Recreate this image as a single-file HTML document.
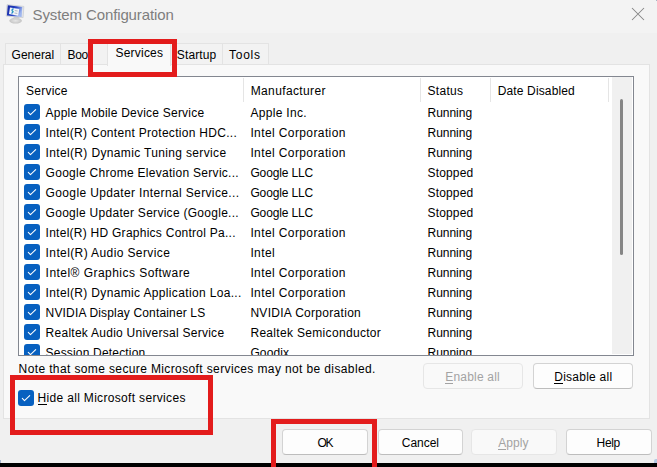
<!DOCTYPE html>
<html><head><meta charset="utf-8">
<style>
html,body{margin:0;padding:0;}
body{width:657px;height:467px;position:relative;overflow:hidden;background:#f0f0f0;font-family:"Liberation Sans",sans-serif;font-size:12px;color:#000;}
.a{position:absolute;}
.t{position:absolute;white-space:nowrap;line-height:20px;}
.tab{position:absolute;top:43px;height:22px;background:#f2f2f2;border:1px solid #e3e3e3;border-radius:1px 1px 0 0;border-bottom:none;box-sizing:border-box;}
.cb{position:absolute;width:16px;height:16px;border-radius:3px;background:#0760c0;}
.cb svg{position:absolute;left:0;top:0;}
.btn{position:absolute;box-sizing:border-box;border:1px solid #d3d3d3;border-bottom-color:#bdbdbd;border-radius:4px;background:#fdfdfd;}
.btn.dis{border-color:#e6e6e6;background:#f9f9f9;}
.red{position:absolute;box-sizing:border-box;border:5px solid #e31c1c;}
u{text-decoration:none;position:relative;}
u:after{content:"";position:absolute;left:0;right:0;bottom:0px;height:1px;background:currentColor;}
</style></head>
<body>

<div class="a" style="left:0;top:0;width:657px;height:33px;background:#f3f3f3;"></div>
<svg class="a" style="left:0;top:0" width="30" height="30" viewBox="0 0 30 30">
  <defs>
   <linearGradient id="scr" x1="0" y1="0" x2="1" y2="0.4">
    <stop offset="0" stop-color="#1424a0"/><stop offset="0.6" stop-color="#2844c4"/><stop offset="1" stop-color="#9fb6ee"/>
   </linearGradient>
   <radialGradient id="stand" cx="0.5" cy="0.5" r="0.5">
    <stop offset="0" stop-color="#e6e6e6"/><stop offset="1" stop-color="#c4c4c4"/>
   </radialGradient>
  </defs>
  <ellipse cx="15.6" cy="20.7" rx="6.3" ry="2.9" fill="url(#stand)"/>
  <polygon points="13.5,16.5 19.5,17 19,19.5 14,19.2" fill="#d0d0d0"/>
  <polygon points="7,4.6 23.9,6.4 23.1,17.6 6.2,16.1" fill="#e4e6ea" stroke="#b9bcc2" stroke-width="0.5"/>
  <polygon points="7.8,5.2 22.3,6.9 21.6,16.9 6.9,15.5" fill="url(#scr)"/>
  <polygon points="10,7.4 19.3,9 18.2,15.7 9,14" fill="#f3f5f8"/>
  <path d="M13.6,8.6 Q11.2,9.6 12.4,11 Q13.6,12.2 11.4,13.4" stroke="#2a8fd0" stroke-width="1.4" fill="none"/><path d="M12.4,11 L13.6,11.4" stroke="#3cc0a0" stroke-width="1"/>
  <path d="M14.8,10.6 L17.6,11 M14.5,13 L17.3,13.4" stroke="#a4acb8" stroke-width="0.9"/>
</svg>
<svg class="a" style="left:631px;top:7px" width="14" height="14" viewBox="0 0 14 14"><path d="M1,1 L13,13 M13,1 L1,13" stroke="#858585" stroke-width="1.05"/></svg>
<div class="tab" style="left:5px;width:56px;"></div>
<div class="tab" style="left:60px;width:48px;"></div>
<div class="tab" style="left:172px;width:51px;"></div>
<div class="tab" style="left:222px;width:47px;"></div>
<div class="a" style="left:3px;top:64px;width:647px;height:355px;background:#f9f9f9;border:1px solid #e3e3e3;box-sizing:border-box;"></div>
<div class="tab" style="left:107px;top:42px;width:64px;height:24px;background:#f9f9f9;"></div>
<div class="a" style="left:18px;top:76px;width:616px;height:280px;background:#fff;border:1px solid #838790;box-sizing:border-box;"></div>
<div class="a" style="left:243px;top:78px;width:1px;height:24px;background:#e5e5e5;"></div>
<div class="a" style="left:420px;top:78px;width:1px;height:24px;background:#e5e5e5;"></div>
<div class="a" style="left:490px;top:78px;width:1px;height:24px;background:#e5e5e5;"></div>
<div class="a" style="left:608px;top:78px;width:1px;height:24px;background:#e5e5e5;"></div>
<div class="a" style="left:612px;top:77px;width:20px;height:277px;background:#f0f0f0;"></div>
<div class="a" style="left:620px;top:99px;width:3px;height:156px;background:#858585;border-radius:1.5px;"></div>
<div class="cb" style="left:18px;top:390px;"><svg width="16" height="16" viewBox="0 0 16 16"><path d="M4.3,8.4 L6.5,10.6 L11.7,5.6" stroke="#fff" stroke-width="1.05" fill="none" stroke-linecap="round" stroke-linejoin="round"/></svg></div>
<div class="btn dis" style="left:423px;top:363px;width:100px;height:26px;"></div>
<div class="btn" style="left:533px;top:363px;width:100px;height:26px;"></div>
<div class="btn" style="left:282px;top:429px;width:86px;height:26px;"></div>
<div class="btn" style="left:378px;top:429px;width:85px;height:26px;"></div>
<div class="btn dis" style="left:471px;top:429px;width:86px;height:26px;"></div>
<div class="btn" style="left:566px;top:429px;width:86px;height:26px;"></div>
<div class="t" id="title" style="left:32.60px;top:5px;font-size:15px;letter-spacing:-0.116px;color:#7e7e7e;">System Configuration</div>
<div class="t" id="tab_general" style="left:11.60px;top:45px;font-size:12px;letter-spacing:-0.017px;">General</div>
<div class="t" id="tab_boot" style="left:67.60px;top:45px;font-size:12px;letter-spacing:-0.433px;">Boot</div>
<div class="t" id="tab_services" style="left:115.50px;top:43px;font-size:12px;letter-spacing:0.214px;">Services</div>
<div class="t" id="tab_startup" style="left:176.80px;top:45px;font-size:12px;letter-spacing:0.133px;">Startup</div>
<div class="t" id="tab_tools" style="left:229.00px;top:45px;font-size:12px;letter-spacing:0.750px;">Tools</div>
<div class="t" id="h_service" style="left:26.10px;top:81px;font-size:12px;letter-spacing:0.233px;">Service</div>
<div class="t" id="h_manu" style="left:250.70px;top:81px;font-size:12px;letter-spacing:0.373px;">Manufacturer</div>
<div class="t" id="h_status" style="left:427.40px;top:81px;font-size:12px;letter-spacing:0.340px;">Status</div>
<div class="t" id="h_date" style="left:497.70px;top:81px;font-size:12px;letter-spacing:0.142px;">Date Disabled</div>
<div class="t" id="note" style="left:18.60px;top:359px;font-size:12px;letter-spacing:0.377px;">Note that some secure Microsoft services may not be disabled.</div>
<div class="t" id="hide" style="left:37.50px;top:388px;font-size:12px;letter-spacing:0.327px;"><u>H</u>ide all Microsoft services</div>
<div class="t" id="enable" style="left:445.20px;top:367px;font-size:12px;letter-spacing:0.200px;color:#a3a3a3;"><u>E</u>nable all</div>
<div class="t" id="disable" style="left:554.30px;top:367px;font-size:12px;letter-spacing:0.240px;"><u>D</u>isable all</div>
<div class="t" id="ok" style="left:317.40px;top:433px;font-size:12px;letter-spacing:-1.300px;">OK</div>
<div class="t" id="cancel" style="left:401.80px;top:433px;font-size:12px;letter-spacing:-0.040px;">Cancel</div>
<div class="t" id="apply" style="left:498.20px;top:433px;font-size:12px;letter-spacing:0.100px;color:#a3a3a3;"><u>A</u>pply</div>
<div class="t" id="help" style="left:596.60px;top:433px;font-size:12px;letter-spacing:-0.333px;">Help</div>
<div class="a" style="left:19px;top:77px;width:593px;height:278px;overflow:hidden;"><div class="a" style="left:-19px;top:-77px;width:657px;height:467px;">
<div class="cb" style="left:24px;top:104px;"><svg width="16" height="16" viewBox="0 0 16 16"><path d="M4.3,8.4 L6.5,10.6 L11.7,5.6" stroke="#fff" stroke-width="1.05" fill="none" stroke-linecap="round" stroke-linejoin="round"/></svg></div>
<div class="cb" style="left:24px;top:124px;"><svg width="16" height="16" viewBox="0 0 16 16"><path d="M4.3,8.4 L6.5,10.6 L11.7,5.6" stroke="#fff" stroke-width="1.05" fill="none" stroke-linecap="round" stroke-linejoin="round"/></svg></div>
<div class="cb" style="left:24px;top:144px;"><svg width="16" height="16" viewBox="0 0 16 16"><path d="M4.3,8.4 L6.5,10.6 L11.7,5.6" stroke="#fff" stroke-width="1.05" fill="none" stroke-linecap="round" stroke-linejoin="round"/></svg></div>
<div class="cb" style="left:24px;top:164px;"><svg width="16" height="16" viewBox="0 0 16 16"><path d="M4.3,8.4 L6.5,10.6 L11.7,5.6" stroke="#fff" stroke-width="1.05" fill="none" stroke-linecap="round" stroke-linejoin="round"/></svg></div>
<div class="cb" style="left:24px;top:184px;"><svg width="16" height="16" viewBox="0 0 16 16"><path d="M4.3,8.4 L6.5,10.6 L11.7,5.6" stroke="#fff" stroke-width="1.05" fill="none" stroke-linecap="round" stroke-linejoin="round"/></svg></div>
<div class="cb" style="left:24px;top:204px;"><svg width="16" height="16" viewBox="0 0 16 16"><path d="M4.3,8.4 L6.5,10.6 L11.7,5.6" stroke="#fff" stroke-width="1.05" fill="none" stroke-linecap="round" stroke-linejoin="round"/></svg></div>
<div class="cb" style="left:24px;top:224px;"><svg width="16" height="16" viewBox="0 0 16 16"><path d="M4.3,8.4 L6.5,10.6 L11.7,5.6" stroke="#fff" stroke-width="1.05" fill="none" stroke-linecap="round" stroke-linejoin="round"/></svg></div>
<div class="cb" style="left:24px;top:244px;"><svg width="16" height="16" viewBox="0 0 16 16"><path d="M4.3,8.4 L6.5,10.6 L11.7,5.6" stroke="#fff" stroke-width="1.05" fill="none" stroke-linecap="round" stroke-linejoin="round"/></svg></div>
<div class="cb" style="left:24px;top:264px;"><svg width="16" height="16" viewBox="0 0 16 16"><path d="M4.3,8.4 L6.5,10.6 L11.7,5.6" stroke="#fff" stroke-width="1.05" fill="none" stroke-linecap="round" stroke-linejoin="round"/></svg></div>
<div class="cb" style="left:24px;top:284px;"><svg width="16" height="16" viewBox="0 0 16 16"><path d="M4.3,8.4 L6.5,10.6 L11.7,5.6" stroke="#fff" stroke-width="1.05" fill="none" stroke-linecap="round" stroke-linejoin="round"/></svg></div>
<div class="cb" style="left:24px;top:304px;"><svg width="16" height="16" viewBox="0 0 16 16"><path d="M4.3,8.4 L6.5,10.6 L11.7,5.6" stroke="#fff" stroke-width="1.05" fill="none" stroke-linecap="round" stroke-linejoin="round"/></svg></div>
<div class="cb" style="left:24px;top:324px;"><svg width="16" height="16" viewBox="0 0 16 16"><path d="M4.3,8.4 L6.5,10.6 L11.7,5.6" stroke="#fff" stroke-width="1.05" fill="none" stroke-linecap="round" stroke-linejoin="round"/></svg></div>
<div class="cb" style="left:24px;top:344px;"><svg width="16" height="16" viewBox="0 0 16 16"><path d="M4.3,8.4 L6.5,10.6 L11.7,5.6" stroke="#fff" stroke-width="1.05" fill="none" stroke-linecap="round" stroke-linejoin="round"/></svg></div>
<div class="t" id="r0_s" style="left:45.60px;top:103px;font-size:12px;letter-spacing:0.223px;">Apple Mobile Device Service</div>
<div class="t" id="r0_m" style="left:250.40px;top:103px;font-size:12px;letter-spacing:0.311px;">Apple Inc.</div>
<div class="t" id="r0_st" style="left:427.50px;top:103px;font-size:12px;letter-spacing:-0.017px;">Running</div>
<div class="t" id="r1_s" style="left:45.60px;top:123px;font-size:12px;letter-spacing:0.297px;">Intel(R) Content Protection HDC...</div>
<div class="t" id="r1_m" style="left:250.40px;top:123px;font-size:12px;letter-spacing:0.394px;">Intel Corporation</div>
<div class="t" id="r1_st" style="left:427.50px;top:123px;font-size:12px;letter-spacing:-0.017px;">Running</div>
<div class="t" id="r2_s" style="left:45.60px;top:143px;font-size:12px;letter-spacing:0.347px;">Intel(R) Dynamic Tuning service</div>
<div class="t" id="r2_m" style="left:250.40px;top:143px;font-size:12px;letter-spacing:0.394px;">Intel Corporation</div>
<div class="t" id="r2_st" style="left:427.50px;top:143px;font-size:12px;letter-spacing:-0.017px;">Running</div>
<div class="t" id="r3_s" style="left:45.60px;top:163px;font-size:12px;letter-spacing:0.281px;">Google Chrome Elevation Servic...</div>
<div class="t" id="r3_m" style="left:250.40px;top:163px;font-size:12px;letter-spacing:-0.133px;">Google LLC</div>
<div class="t" id="r3_st" style="left:427.50px;top:163px;font-size:12px;letter-spacing:0.167px;">Stopped</div>
<div class="t" id="r4_s" style="left:45.60px;top:183px;font-size:12px;letter-spacing:0.364px;">Google Updater Internal Service...</div>
<div class="t" id="r4_m" style="left:250.40px;top:183px;font-size:12px;letter-spacing:-0.133px;">Google LLC</div>
<div class="t" id="r4_st" style="left:427.50px;top:183px;font-size:12px;letter-spacing:0.167px;">Stopped</div>
<div class="t" id="r5_s" style="left:45.60px;top:203px;font-size:12px;letter-spacing:0.281px;">Google Updater Service (Google...</div>
<div class="t" id="r5_m" style="left:250.40px;top:203px;font-size:12px;letter-spacing:-0.133px;">Google LLC</div>
<div class="t" id="r5_st" style="left:427.50px;top:203px;font-size:12px;letter-spacing:0.167px;">Stopped</div>
<div class="t" id="r6_s" style="left:45.60px;top:223px;font-size:12px;letter-spacing:0.258px;">Intel(R) HD Graphics Control Pa...</div>
<div class="t" id="r6_m" style="left:250.40px;top:223px;font-size:12px;letter-spacing:0.394px;">Intel Corporation</div>
<div class="t" id="r6_st" style="left:427.50px;top:223px;font-size:12px;letter-spacing:-0.017px;">Running</div>
<div class="t" id="r7_s" style="left:45.60px;top:243px;font-size:12px;letter-spacing:0.390px;">Intel(R) Audio Service</div>
<div class="t" id="r7_m" style="left:250.40px;top:243px;font-size:12px;letter-spacing:0.400px;">Intel</div>
<div class="t" id="r7_st" style="left:427.50px;top:243px;font-size:12px;letter-spacing:-0.017px;">Running</div>
<div class="t" id="r8_s" style="left:45.60px;top:263px;font-size:12px;letter-spacing:0.461px;">Intel® Graphics Software</div>
<div class="t" id="r8_m" style="left:250.40px;top:263px;font-size:12px;letter-spacing:0.394px;">Intel Corporation</div>
<div class="t" id="r8_st" style="left:427.50px;top:263px;font-size:12px;letter-spacing:-0.017px;">Running</div>
<div class="t" id="r9_s" style="left:45.60px;top:283px;font-size:12px;letter-spacing:0.344px;">Intel(R) Dynamic Application Loa...</div>
<div class="t" id="r9_m" style="left:250.40px;top:283px;font-size:12px;letter-spacing:0.394px;">Intel Corporation</div>
<div class="t" id="r9_st" style="left:427.50px;top:283px;font-size:12px;letter-spacing:-0.017px;">Running</div>
<div class="t" id="r10_s" style="left:45.60px;top:303px;font-size:12px;letter-spacing:0.162px;">NVIDIA Display Container LS</div>
<div class="t" id="r10_m" style="left:250.40px;top:303px;font-size:12px;letter-spacing:0.294px;">NVIDIA Corporation</div>
<div class="t" id="r10_st" style="left:427.50px;top:303px;font-size:12px;letter-spacing:-0.017px;">Running</div>
<div class="t" id="r11_s" style="left:45.60px;top:323px;font-size:12px;letter-spacing:0.257px;">Realtek Audio Universal Service</div>
<div class="t" id="r11_m" style="left:250.40px;top:323px;font-size:12px;letter-spacing:0.320px;">Realtek Semiconductor</div>
<div class="t" id="r11_st" style="left:427.50px;top:323px;font-size:12px;letter-spacing:-0.017px;">Running</div>
<div class="t" id="r12_s" style="left:45.60px;top:343px;font-size:12px;letter-spacing:0.181px;">Session Detection</div>
<div class="t" id="r12_m" style="left:250.40px;top:343px;font-size:12px;letter-spacing:0.120px;">Goodix</div>
<div class="t" id="r12_st" style="left:427.50px;top:343px;font-size:12px;letter-spacing:-0.017px;">Running</div>
</div></div>
<div class="a" style="left:0;top:463px;width:657px;height:4px;background:#000;"></div>
<div class="a" style="left:654px;top:459px;width:3px;height:4px;background:#b4c9e4;border-radius:2px 0 0 0;"></div>
<div class="a" style="left:0;top:460px;width:1px;height:3px;background:#a8b4cc;"></div>
<div class="a" style="left:656px;top:0;width:1px;height:1px;background:#a9b6c6;"></div>
<div class="red" style="left:88px;top:39px;width:89px;height:38px;"></div>
<div class="red" style="left:10px;top:375px;width:203px;height:60px;"></div>
<div class="red" style="left:271px;top:419px;width:106px;height:54px;"></div>
</body></html>
